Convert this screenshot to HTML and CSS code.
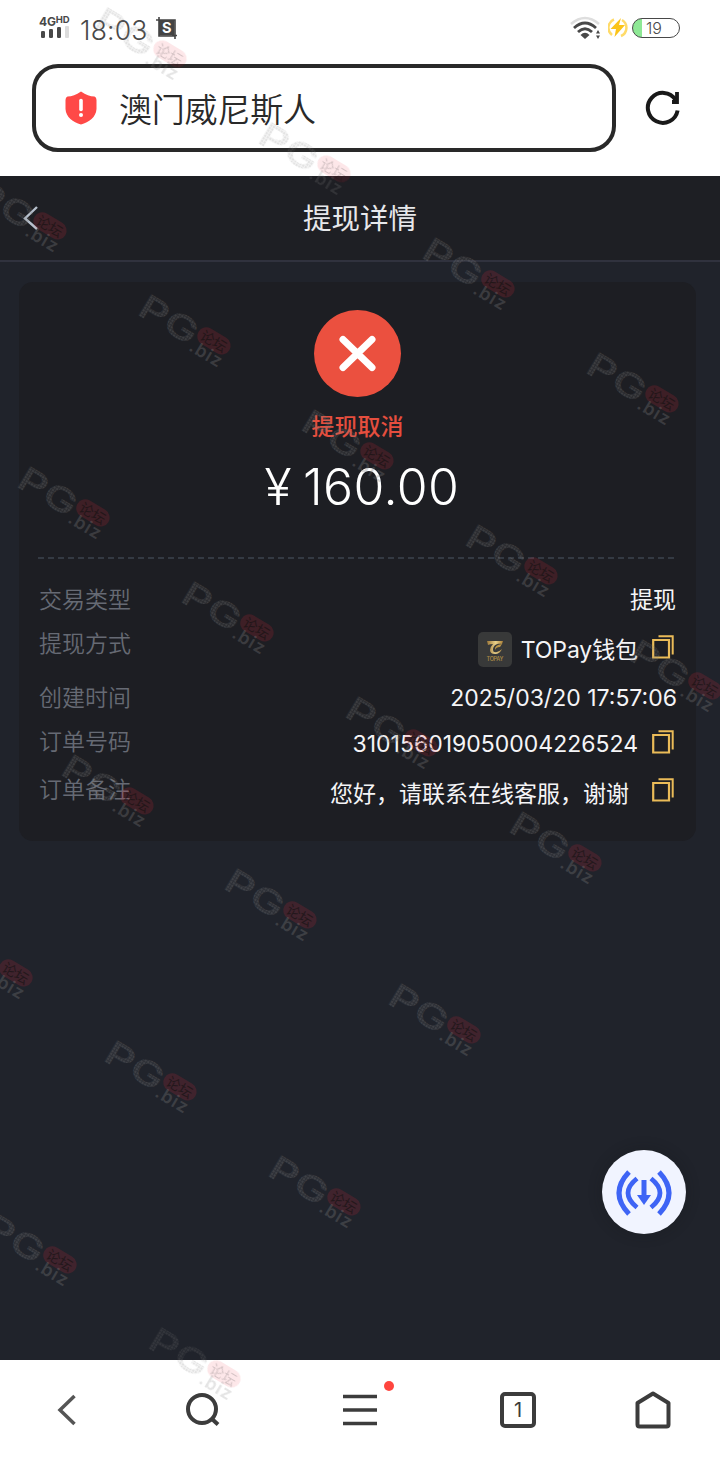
FILE: index.html
```html
<!DOCTYPE html>
<html lang="zh-CN">
<head>
<meta charset="utf-8">
<title>提现详情</title>
<link rel="stylesheet" href="styles.css">
</head>
<body>
<div class="screen">
  <header class="statusbar">
    <div class="network">
      <div class="net-type">4G<span>HD</span></div>
      <svg width="30" height="12" viewBox="0 0 30 12"><g fill="#484848"><rect x="2" y="5" width="4" height="7" rx="1.3"/><rect x="10" y="3" width="4" height="9" rx="1.3"/><rect x="18" y="1" width="4" height="11" rx="1.3"/></g><rect x="26" y="0" width="4" height="12" rx="1" fill="#dcdcdc"/></svg>
    </div>
    <span class="clock">18:03</span>
    <svg class="s-icon" width="22" height="24" viewBox="0 0 22 24"><path d="M0 4H19V20H3V1M19 17V23M16 19.5H21" fill="none" stroke="#444" stroke-width="1.6"/><rect x="3" y="4" width="15.5" height="15.500" fill="#444"/><text x="10.800" y="17" text-anchor="middle" font-size="14.500" font-weight="700" fill="#fff">S</text></svg>
    <div class="status-right">
      <svg width="33" height="26" viewBox="0 0 33 26" fill="none"><path d="M1 8Q15-4 29 8" stroke="#dedede" stroke-width="2.500"/><path d="M4 12Q15 2 26 12M8 16Q15 9.500 22 16" stroke="#484848" stroke-width="2.800"/><path d="M10.500 19Q15 14.500 19.500 19L15 23Z" fill="#484848"/><path d="M26 17.500L28 14L30 17.500ZM26 19.500L28 23L30 19.500Z" fill="#484848"/></svg>
      <svg class="bolt" width="20" height="22" viewBox="0 0 20 22"><path d="M6 2.500A9 9 0 0 0 4 18M14 3A9 9 0 0 1 13 19" fill="none" stroke="#ffdb69" stroke-width="2.500"/><path d="M13 1L2.500 12H8L6.500 20L17 8H11Z" fill="#fbc419"/></svg>
      <div class="battery"><span>19</span></div>
    </div>
  </header>
  <div class="addressbar">
    <div class="address">
      <svg width="32" height="34" viewBox="0 0 32 34"><path d="M16 .5C21 4 25 5.500 29.500 5.500Q31.500 6 31.500 9V18C31 26 24 31.500 16 33.500C8 31.500 1 26 .5 18V9Q.5 6 2.500 5.500C7 5.500 11 4 16 .5Z" fill="#ff4947"/><path d="M16 9.500V18.500" stroke="#fff" stroke-width="3.600" stroke-linecap="round"/><circle cx="16" cy="24" r="2" fill="#fff"/></svg>
      <span>澳门威尼斯人</span>
    </div>
    <svg class="reload" width="36" height="36" viewBox="0 0 36 36" fill="none" stroke="#191919" stroke-width="4"><path d="M32.600 20.500A15 15 0 1 1 30.500 9.800"/><path d="M32 2V12H27" stroke-width="3.800"/></svg>
  </div>
  <nav class="titlebar">
    <svg class="back" width="16" height="24" viewBox="0 0 16 24"><path d="M14 1L2 12.500L14 23" fill="none" stroke="#b8c1cd" stroke-width="2.400"/></svg>
    <h1>提现详情</h1>
  </nav>
  <main class="content">
    <section class="card">
      <div class="result">
        <svg width="88" height="88" viewBox="0 0 88 88"><circle cx="43.500" cy="44.500" r="43.500" fill="#eb503f"/><path d="M29 30.500L58 58.500M58 30.500L29 58.500" stroke="#fff" stroke-width="7" stroke-linecap="round"/></svg>
        <div class="state">提现取消</div>
        <div class="amount"><span class="yen">¥</span><span>160.00</span></div>
      </div>
      <svg class="divider" width="640" height="2"><path d="M0 1H640" stroke="#343a43" stroke-width="2" stroke-dasharray="6 4"/></svg>
      <dl class="details">
        <div class="row type"><dt>交易类型</dt><dd>提现</dd></div>
        <div class="row method"><dt>提现方式</dt><dd>
          <svg class="paylogo" width="34" height="35" viewBox="0 0 34 35"><defs><linearGradient id="gold"><stop stop-color="#9b7638"/><stop offset=".55" stop-color="#ead18a"/><stop offset="1" stop-color="#a87e36"/></linearGradient></defs><rect width="34" height="35" rx="5" fill="#383939"/><path d="M9 9H25L24 12C18 11 15 14 15 18Q15 21 19 20Q22 19 24 17Q22 22 17 22Q12 22 12 18Q12 15 15 12Q12 12 10 13Z" fill="url(#gold)"/><path d="M17 18Q16 13 24 12L22 15Q18 15 17 18" fill="#b89346"/><text x="17" y="29" font-size="5.500" font-weight="600" text-anchor="middle" textLength="17" fill="#a48545">TOPAY</text></svg>
          <span class="wallet">TOPay钱包</span><svg class="copy"><use href="#copy"/></svg></dd></div>
        <div class="row time"><dt>创建时间</dt><dd>2025/03/20 17:57:06</dd></div>
        <div class="row number"><dt>订单号码</dt><dd><span>310156019050004226524</span><svg class="copy"><use href="#copy"/></svg></dd></div>
        <div class="row remark"><dt>订单备注</dt><dd><span>您好，请联系在线客服，谢谢</span><svg class="copy"><use href="#copy"/></svg></dd></div>
      </dl>
    </section>
  </main>
  <footer class="browserbar">
    <svg width="20" height="32" viewBox="0 0 20 32"><path d="M17.500 2L3 16L17.500 30" fill="none" stroke="#555" stroke-width="3.500"/></svg>
    <svg width="36" height="36" viewBox="0 0 36 36" fill="none" stroke="#3c3c3c" stroke-width="4"><circle cx="16" cy="17" r="14"/><path d="M26 27L32 32.500"/></svg>
    <div class="menu"><svg width="36" height="34" viewBox="0 0 36 34"><path d="M1 3.500H35M1 17H35M1 30.500H35" stroke="#3c3c3c" stroke-width="3.700"/></svg><i></i></div>
    <div class="tabs">1</div>
    <svg width="36" height="38" viewBox="0 0 36 38"><path d="M2.500 12L18 2.500L33.500 12V33.500Q33.500 35.500 31.500 35.500H4.500Q2.500 35.500 2.500 33.500Z" fill="none" stroke="#3c3c3c" stroke-width="4" stroke-linejoin="round"/></svg>
  </footer>
  <div class="float-button">
    <svg width="56" height="46" viewBox="0 0 56 46" fill="none" stroke="#3e64f5"><path d="M13 2Q-7 23 13 44M43 2Q63 23 43 44" stroke-width="5"/><path d="M21 8.500Q3 23 21 37.500M35 8.500Q53 23 35 37.500" stroke-width="4.800"/><path d="M28 10V27" stroke-width="5"/><path d="M21 25H35L28 35Z" fill="#3e64f5" stroke="none"/></svg>
  </div>
  <svg class="marks" width="720" height="1460" viewBox="0 0 720 1460">
    <defs>
      <symbol id="copy" viewBox="0 0 22 24"><path d="M1.200 5H17V22.500H1.200Z" fill="none" stroke="#eabb58" stroke-width="2.200"/><path d="M6.500 1.200H20.700V19.500" fill="none" stroke="#eabb58" stroke-width="2"/></symbol>
      <pattern id="mesh" width="3" height="3" patternUnits="userSpaceOnUse"><rect width="3" height="3" fill="#808080" opacity=".14"/><rect width="2" height="2" fill="#808080" opacity=".2"/></pattern>
      <g id="mark"><g transform="translate(13 1) rotate(31)">
        <text class="mark-pg" x="-1" y="26" textLength="63" lengthAdjust="spacingAndGlyphs">PG</text>
        <rect x="62" y="0" width="36" height="18" rx="9" fill="#ee2635" opacity=".16"/>
        <text class="mark-forum" x="66" y="14.500">论坛</text>
        <text class="mark-biz" x="62" y="30" textLength="35">.biz</text>
      </g></g>
    </defs>
    <g class="on-light"><use href="#mark" x="93" y="4"/><use href="#mark" x="257" y="119"/><use href="#mark" x="147" y="1324"/></g>
    <use href="#mark" x="421" y="234"/><use href="#mark" x="585" y="349"/>
    <use href="#mark" x="-27" y="176"/><use href="#mark" x="137" y="291"/><use href="#mark" x="300" y="406"/><use href="#mark" x="464" y="521"/><use href="#mark" x="628" y="636"/>
    <use href="#mark" x="16" y="463"/><use href="#mark" x="180" y="578"/><use href="#mark" x="344" y="693"/><use href="#mark" x="508" y="808"/>
    <use href="#mark" x="60" y="751"/><use href="#mark" x="223" y="865"/><use href="#mark" x="387" y="980"/>
    <use href="#mark" x="-61" y="923"/><use href="#mark" x="103" y="1037"/><use href="#mark" x="267" y="1152"/><use href="#mark" x="-17" y="1210"/>
  </svg>
</div>
</body>
</html>
```

FILE: styles.css
```css
* { box-sizing: border-box; }
body { margin: 0; font-family: Inter, "Noto Sans CJK SC", sans-serif; }
svg { display: block; flex: none; }
.screen { position: relative; width: 720px; height: 1460px; overflow: hidden; display: flex; flex-direction: column; background: #fff; }

.statusbar { height: 56px; display: flex; align-items: flex-start; padding: 14px 40px 0 39px; color: #484848; }
.network { width: 41px; }
.network svg { margin-top: 1px; }
.net-type { height: 11px; font-size: 12px; line-height: 12px; font-weight: 700; letter-spacing: -.2px; white-space: nowrap; }
.net-type span { font-size: 9.5px; vertical-align: 3px; }
.clock { width: 76px; font-size: 26.5px; line-height: 32px; font-weight: 300; letter-spacing: .2px; white-space: nowrap; }
.s-icon { margin-top: 2px; }
.status-right { margin-left: auto; display: flex; align-items: flex-start; }
.status-right > svg:first-child { margin-top: 2px; margin-right: 5px; }
.bolt { margin-top: 3px; }
.battery { margin: 4px 0 0 4px; width: 48px; height: 20px; border: 1.5px solid #484848; border-radius: 10px; background: linear-gradient(90deg, #8ee895 9px, #fff 9px); font-size: 16px; font-weight: 350; line-height: 18px; padding-left: 13px; }

.addressbar { height: 120px; padding: 8px 39px 0 32px; display: flex; }
.address { flex: none; width: 584px; height: 88px; border: 4px solid #292929; border-radius: 26px; display: flex; align-items: center; padding-left: 29px; color: #292929; font-size: 33px; font-weight: 350; }
.address span { margin-left: 22px; letter-spacing: -.2px; }
.reload { margin: 26px 0 0 29px; }

.titlebar { height: 86px; border-bottom: 2px solid #30323e; background: #1e1f24; display: grid; grid-template-columns: 60px 1fr 60px; align-items: center; }
.back { margin-left: 23px; }
h1 { margin: 1px 0 0; color: #e7e8eb; text-align: center; font-size: 28.5px; font-weight: 400; line-height: 40px; }
.content { height: 1098px; padding: 20px 24px 0 19px; background: #20232b; }
.card { height: 559px; border-radius: 14px; background: #1d1e23; padding: 27px 19px 0; }
.result { height: 248px; display: flex; flex-direction: column; align-items: center; }
.state { height: 30px; margin-top: 15px; color: #e54e3e; font-size: 23px; line-height: 30px; font-weight: 500; }
.amount { margin-top: 12px; height: 66px; padding-left: 9px; display: flex; color: #fff; font-size: 50px; line-height: 66px; font-weight: 300; letter-spacing: .4px; }
.yen { margin-right: 11px; }
.details { margin: 26px 0 0; }
.row { display: flex; justify-content: space-between; align-items: flex-start; font-size: 23px; }
dt { color: #666a74; line-height: 30px; font-weight: 350; padding-left: 1px; }
dd { margin: 0; display: flex; align-items: center; color: #f5f5f7; font-weight: 370; line-height: 30px; height: 30px; white-space: nowrap; }
.type { height: 44px; }
.type dd { padding-right: 1px; }
.method { height: 54px; }
.method dd { height: 41px; }
.wallet { letter-spacing: -.1px; }
.time { height: 44px; }
.number { height: 48px; }
.number dd { height: 34px; }
.remark dd { height: 38px; }
.paylogo { margin-right: 9px; }
.copy { width: 22px; height: 24px; margin: -5px 3px 0 14px; }
.remark .copy { margin-left: 23px; margin-top: -8px; }

.browserbar { height: 100px; display: flex; align-items: center; background: #fff; padding: 0 49px 0 57px; }
.browserbar > svg:nth-child(2) { margin-left: 109px; }
.menu { position: relative; margin-left: 120px; }
.menu i { position: absolute; width: 10px; height: 10px; left: 42px; top: -12px; border-radius: 50%; background: #ff453e; }
.tabs { width: 36px; height: 36px; margin: 0 99px 0 122px; border: 4px solid #3c3c3c; border-radius: 5px; color: #3c3c3c; font-size: 20px; line-height: 28px; text-align: center; }

.float-button { position: absolute; left: 602px; top: 1150px; width: 84px; height: 84px; border-radius: 50%; background: #f1f4ff; box-shadow: 0 0 14px #15171c55; display: grid; place-items: center; padding-top: 2px; }
.marks { position: absolute; inset: 0; pointer-events: none; }
.on-light { opacity: .7; --forum: .25; }
.mark-pg { font: 600 34px Inter, sans-serif; fill: url(#mesh); }
.mark-forum { font: 14px "Noto Sans CJK SC", sans-serif; fill: #111; opacity: var(--forum, .6); }
.mark-biz { font: 600 18px Inter, sans-serif; fill: #808080; opacity: .3; }
```
